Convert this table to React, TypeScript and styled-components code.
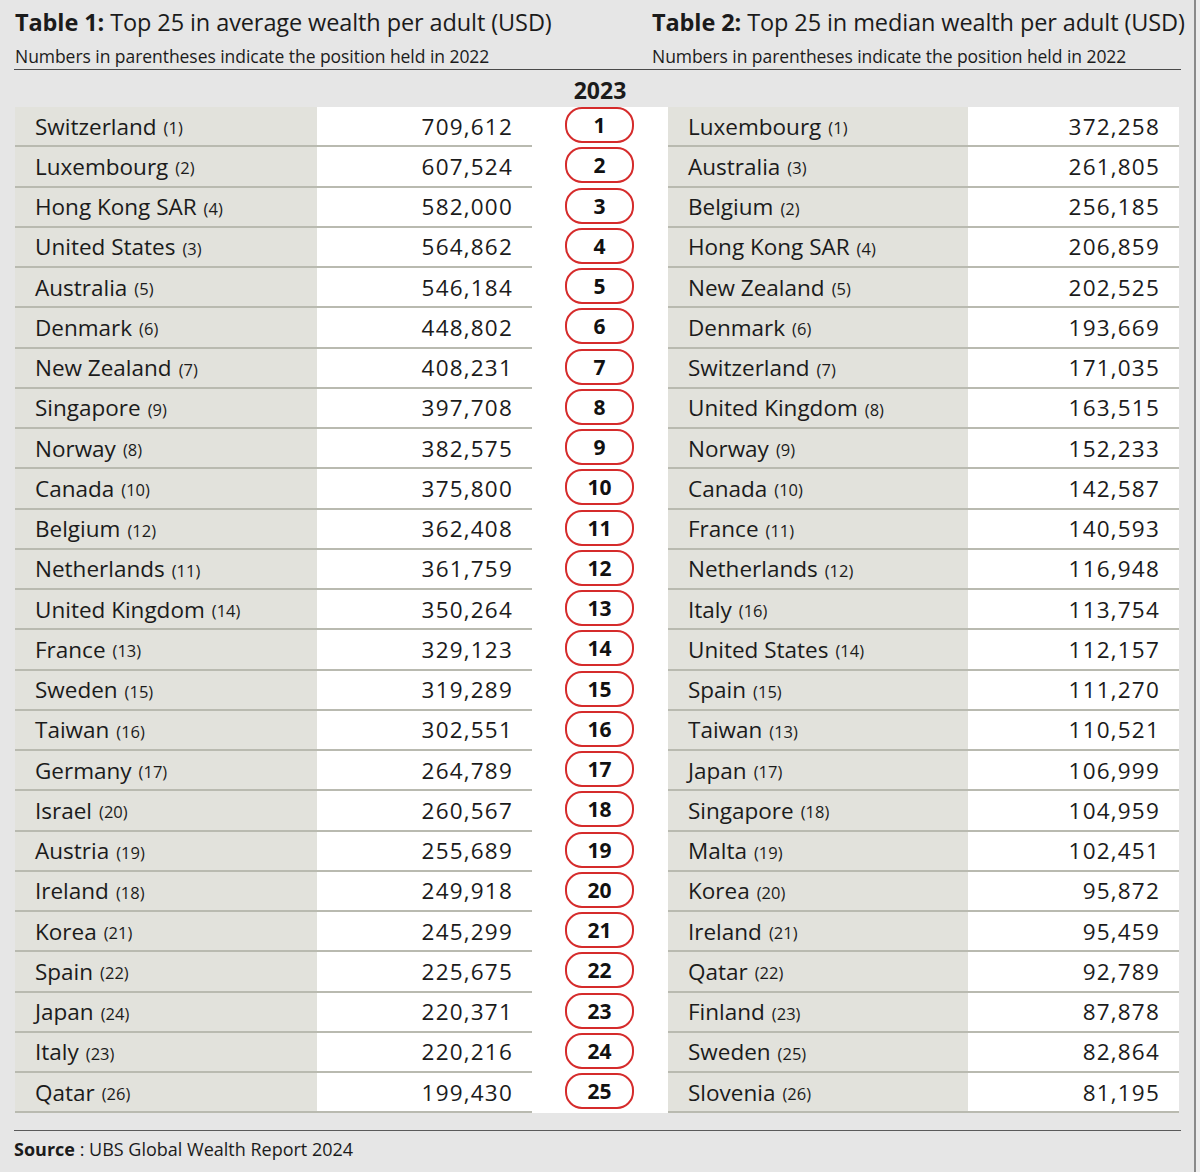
import React from 'react'
import styled, { createGlobalStyle } from 'styled-components'

const GlobalStyle = createGlobalStyle`
  html, body {
    margin: 0;
    padding: 0;
    background: #ededed;
  }
  body {
    font-family: 'Open Sans', 'Noto Sans', sans-serif;
    color: #1b1b1b;
  }
`

type Row = [string, string, string]

const averageWealth: Row[] = [
  ['Switzerland', '1', '709,612'],
  ['Luxembourg', '2', '607,524'],
  ['Hong Kong SAR', '4', '582,000'],
  ['United States', '3', '564,862'],
  ['Australia', '5', '546,184'],
  ['Denmark', '6', '448,802'],
  ['New Zealand', '7', '408,231'],
  ['Singapore', '9', '397,708'],
  ['Norway', '8', '382,575'],
  ['Canada', '10', '375,800'],
  ['Belgium', '12', '362,408'],
  ['Netherlands', '11', '361,759'],
  ['United Kingdom', '14', '350,264'],
  ['France', '13', '329,123'],
  ['Sweden', '15', '319,289'],
  ['Taiwan', '16', '302,551'],
  ['Germany', '17', '264,789'],
  ['Israel', '20', '260,567'],
  ['Austria', '19', '255,689'],
  ['Ireland', '18', '249,918'],
  ['Korea', '21', '245,299'],
  ['Spain', '22', '225,675'],
  ['Japan', '24', '220,371'],
  ['Italy', '23', '220,216'],
  ['Qatar', '26', '199,430']
]

const medianWealth: Row[] = [
  ['Luxembourg', '1', '372,258'],
  ['Australia', '3', '261,805'],
  ['Belgium', '2', '256,185'],
  ['Hong Kong SAR', '4', '206,859'],
  ['New Zealand', '5', '202,525'],
  ['Denmark', '6', '193,669'],
  ['Switzerland', '7', '171,035'],
  ['United Kingdom', '8', '163,515'],
  ['Norway', '9', '152,233'],
  ['Canada', '10', '142,587'],
  ['France', '11', '140,593'],
  ['Netherlands', '12', '116,948'],
  ['Italy', '16', '113,754'],
  ['United States', '14', '112,157'],
  ['Spain', '15', '111,270'],
  ['Taiwan', '13', '110,521'],
  ['Japan', '17', '106,999'],
  ['Singapore', '18', '104,959'],
  ['Malta', '19', '102,451'],
  ['Korea', '20', '95,872'],
  ['Ireland', '21', '95,459'],
  ['Qatar', '22', '92,789'],
  ['Finland', '23', '87,878'],
  ['Sweden', '25', '82,864'],
  ['Slovenia', '26', '81,195']
]

const Page = styled.div`
  width: 1196px;
  height: 1172px;
  box-sizing: border-box;
  background: #e6e6e6;
  border-right: 2px solid #8a8a8a;
  padding: 6px 0 0 14px;
`

const Header = styled.div`
  display: grid;
  grid-template-columns: 637px 530px;
  width: 1167px;
  border-bottom: 1.5px solid #4a4a4a;
  padding-bottom: 1px;
`

const Title = styled.h1`
  margin: 0 0 0 1px;
  font-size: 23.5px;
  font-weight: 400;
  line-height: 32px;
  letter-spacing: -0.1px;
  white-space: nowrap;
  b {
    font-weight: 700;
  }
`

const Subtitle = styled.div`
  margin: 6px 0 0 1px;
  font-size: 17.5px;
  line-height: 24px;
  letter-spacing: -0.05px;
  white-space: nowrap;
`

const YearLabel = styled.div`
  grid-column: 2;
  text-align: center;
  font-size: 23px;
  font-weight: 700;
  line-height: 40px;
  height: 37px;
`

const Grid = styled.div`
  display: grid;
  grid-template-columns: 517px 136px 511px;
  grid-template-rows: 37px;
  grid-auto-rows: 40.25px;
  margin-left: 1px;
`

const TableRow = styled.div<{ $nameWidth: number }>`
  display: grid;
  grid-template-columns: ${p => p.$nameWidth}px 1fr;
  border-bottom: 2.5px solid #b9bab0;
  box-sizing: border-box;
`

const NameCell = styled.div`
  background: #e2e2dc;
  display: flex;
  align-items: center;
  padding-left: 20px;
  font-size: 22.5px;
  white-space: nowrap;
  span {
    font-size: 16.5px;
    margin-left: 7px;
    margin-top: 3px;
  }
`

const ValueCell = styled.div`
  background: #fff;
  display: flex;
  align-items: center;
  justify-content: flex-end;
  padding-right: 19px;
  font-size: 22.5px;
  letter-spacing: 1.2px;
`

const RankCell = styled.div`
  background: #fff;
  display: flex;
  align-items: center;
  justify-content: center;
  padding-right: 1px;
`

const Pill = styled.div`
  width: 65px;
  height: 32px;
  border: 2.5px solid #d52b2b;
  border-radius: 17px;
  display: flex;
  align-items: center;
  justify-content: center;
  font-size: 21px;
  font-weight: 700;
  margin-top: -4px;
  color: #111;
`

const Footer = styled.div`
  width: 1167px;
  margin-top: 17px;
  border-top: 1.5px solid #5a5a5a;
  padding-top: 6px;
  font-size: 18px;
  b {
    font-weight: 700;
  }
`

export default function App() {
  return (
    <Page>
      <GlobalStyle />
      <Header>
        <div>
          <Title>
            <b>Table 1:</b> Top 25 in average wealth per adult (USD)
          </Title>
          <Subtitle>Numbers in parentheses indicate the position held in 2022</Subtitle>
        </div>
        <div>
          <Title>
            <b>Table 2:</b> Top 25 in median wealth per adult (USD)
          </Title>
          <Subtitle>Numbers in parentheses indicate the position held in 2022</Subtitle>
        </div>
      </Header>
      <Grid>
        <YearLabel>2023</YearLabel>
        <div />
        {averageWealth.map((row, i) => {
          const right = medianWealth[i]
          return (
            <React.Fragment key={row[0]}>
              <TableRow $nameWidth={302}>
                <NameCell>
                  {row[0]}
                  <span>({row[1]})</span>
                </NameCell>
                <ValueCell>{row[2]}</ValueCell>
              </TableRow>
              <RankCell>
                <Pill>{i + 1}</Pill>
              </RankCell>
              <TableRow $nameWidth={300}>
                <NameCell>
                  {right[0]}
                  <span>({right[1]})</span>
                </NameCell>
                <ValueCell>{right[2]}</ValueCell>
              </TableRow>
            </React.Fragment>
          )
        })}
      </Grid>
      <Footer>
        <b>Source</b> : UBS Global Wealth Report 2024
      </Footer>
    </Page>
  )
}
